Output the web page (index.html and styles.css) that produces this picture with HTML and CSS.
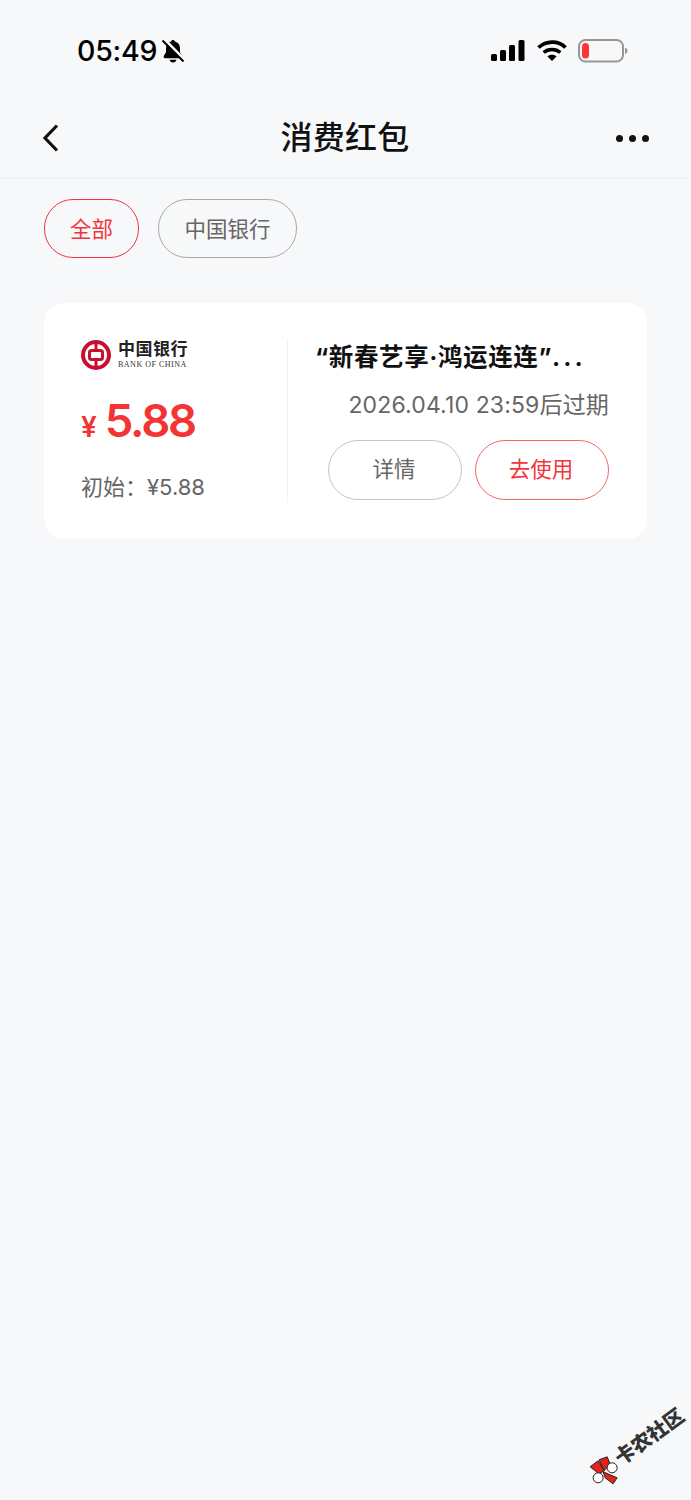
FILE: index.html
```html
<!DOCTYPE html>
<html lang="zh-CN">
<head>
<meta charset="utf-8">
<title>消费红包</title>
<link rel="stylesheet" href="styles.css">
</head>
<body>
<div class="page">
  <header class="status">
    <div class="status-left">
      <span class="time">05:49</span>
      <svg class="bell" width="24" height="26" viewBox="0 0 24 26"><path d="M12 2c1 0 1.800.7 1.900 1.600 3.500.8 5.100 3.500 5.100 7v3.400c0 1.300 2.400 3.300 2.400 4.800 0 .8-.5 1.400-1.400 1.400H4c-.9 0-1.400-.6-1.400-1.400 0-1.500 2.400-3.500 2.400-4.800v-3.400c0-3.500 1.600-6.200 5.100-7C10.200 2.700 11 2 12 2z" fill="#000"/><path d="M8.500 21.700h7c-.3 1.600-1.700 2.800-3.500 2.800s-3.200-1.200-3.500-2.800z" fill="#000"/><path d="M3.500 1.500l20 20.500" stroke="#f7f8fa" stroke-width="3"/><path d="M1.500 2.500l21 21" stroke="#000" stroke-width="2"/></svg>
    </div>
    <div class="status-right">
      <svg width="34" height="22" viewBox="0 0 34 22"><rect x="0" y="14" width="6" height="7" rx="1.500"/><rect x="9" y="10" width="6" height="11" rx="1.500"/><rect x="18" y="5" width="6" height="16" rx="1.500"/><rect x="27.500" y="0" width="6" height="21" rx="1.500"/></svg>
      <svg width="30" height="22" viewBox="0 0 30 22"><path d="M1.500 7.500C9 .8 21-.2 28.500 7.500" fill="none" stroke="#000" stroke-width="3.600"/><path d="M6.700 12.500c4.500-4 12-4 16.600 0" fill="none" stroke="#000" stroke-width="3.600"/><path d="M10.300 16.300c2.700-2.200 6.700-2.200 9.400 0L15 21z"/></svg>
      <svg class="battery" width="50" height="24" viewBox="0 0 50 24"><rect x="1" y="1" width="44" height="21.500" rx="6.500" fill="none" stroke="#969696" stroke-width="2"/><rect x="4" y="4" width="7" height="15.500" rx="3.500" fill="#ff3434"/><path d="M47 8.500c1.500.4 2.500 1.700 2.500 3.200s-1 2.800-2.500 3.200z" fill="#969696"/></svg>
    </div>
  </header>

  <nav class="nav">
    <svg class="back" width="20" height="30" viewBox="0 0 20 30"><path d="M16 2.500L4 15l12 12.500" fill="none" stroke="#111" stroke-width="3.200"/></svg>
    <h1 class="title">消费红包</h1>
    <div class="more"><i></i><i></i><i></i></div>
  </nav>

  <div class="chips">
    <span class="chip chip-on">全部</span>
    <span class="chip">中国银行</span>
  </div>

  <section class="card">
    <div class="card-left">
      <div class="logo">
        <svg width="30" height="30" viewBox="0 0 30 30"><circle cx="15" cy="15" r="13" fill="none" stroke="#c8102e" stroke-width="4"/><rect x="8.500" y="10.500" width="13" height="9" rx="2" fill="none" stroke="#c8102e" stroke-width="3"/><path d="M15 2v8M15 20v8" stroke="#c8102e" stroke-width="3"/></svg>
        <div class="logo-text">
          <span class="logo-cn">中国银行</span>
          <span class="logo-en">BANK OF CHINA</span>
        </div>
      </div>
      <div class="amount"><span class="yen">¥</span><span class="value">5.88</span></div>
      <div class="initial">初始：¥5.88</div>
    </div>
    <div class="card-right">
      <div class="name">“新春艺享·鸿运连连”<span class="dots">...</span></div>
      <div class="expire">2026.04.10 23:59后过期</div>
      <div class="actions">
        <span class="btn">详情</span>
        <span class="btn btn-red">去使用</span>
      </div>
    </div>
  </section>

  <div class="mark">
    <svg class="mark-icon" width="30" height="30" viewBox="0 0 30 30"><path d="M1 12l8-6 6 10-5 3z" fill="#e3231b" stroke="#222"/><path d="M10 5l8-3 3 7-6 7z" fill="#e3231b" stroke="#222"/><path d="M14 17l14 6-4 6-8-6z" fill="#e3231b" stroke="#222"/><circle cx="9" cy="23" r="5" fill="#fff" stroke="#222"/><circle cx="23" cy="13" r="5" fill="#fff" stroke="#222"/></svg>
    <span class="mark-text">卡农社区</span>
  </div>
</div>
</body>
</html>
```

FILE: styles.css
```css
* { box-sizing: border-box; margin: 0; padding: 0; }
html, body { width: 691px; height: 1500px; overflow: hidden; }
body {
  background: #f7f8fa;
  font-family: Inter, "Noto Sans CJK SC", sans-serif;
  color: #666;
}
.page { position: relative; width: 691px; height: 1500px; }

.status {
  height: 100px;
  padding: 35px 63px 0 77px;
  display: flex;
  justify-content: space-between;
  align-items: flex-start;
}
.status-left { display: flex; align-items: center; gap: 4px; height: 32px; }
.time { font-size: 28.500px; font-weight: 500; color: #000; line-height: 32px; letter-spacing: -.2px; }
.status-right { display: flex; align-items: center; gap: 12px; height: 32px; }
.battery { margin-left: -1px; }

.nav {
  height: 79px;
  border-bottom: 1px solid #eeeff1;
  padding: 0 42px 2px 41px;
  display: grid;
  grid-template-columns: 1fr auto 1fr;
  align-items: center;
}
.title { font-size: 32px; font-weight: 500; color: #111; letter-spacing: .3px; line-height: 44px; }
.more { display: flex; gap: 6px; justify-self: end; }
.more i { width: 7px; height: 7px; border-radius: 50%; background: #111; }

.chips { display: flex; gap: 19px; padding: 20px 0 0 44px; }
.chip {
  height: 59px;
  padding: 0 25px;
  border: 1px solid #a9a9a9;
  border-radius: 29px;
  font-size: 21.500px;
  line-height: 58px;
  color: #666;
}
.chip:last-child { padding: 0 25.500px; }
.chip-on { border-color: #f4333c; color: #f4333c; }

.card {
  margin: 45px 44px 0;
  height: 236px;
  background: #fff;
  border-radius: 20px;
  display: flex;
  padding: 37px 38px 37px 37px;
}
.card-left {
  width: 207px;
  border-right: 1px solid #f2f2f2;
  display: flex;
  flex-direction: column;
}
.logo { display: flex; align-items: center; gap: 7px; height: 30px; }
.logo-text { display: flex; flex-direction: column; width: 70px; }
.logo-cn { font-size: 17px; font-weight: 700; color: #222; line-height: 19px; letter-spacing: .5px; white-space: nowrap; }
.logo-en { font-family: "Liberation Serif", serif; font-size: 8px; color: #333; line-height: 11px; letter-spacing: .5px; white-space: nowrap; }
.amount { display: flex; align-items: baseline; gap: 8px; margin-top: 23px; color: #f33334; height: 56px; }
.yen { font-size: 28px; font-weight: 600; line-height: 56px; }
.value { font-size: 45.500px; font-weight: 600; line-height: 56px; letter-spacing: -2.200px; }
.initial { font-size: 22px; line-height: 30px; margin-top: 23px; white-space: nowrap; }

.card-right { flex: 1; display: flex; flex-direction: column; align-items: flex-end; min-width: 0; }
.name { align-self: flex-start; margin: -2px 0 0 27px; font-size: 24.500px; font-weight: 700; color: #111; line-height: 38px; white-space: nowrap; letter-spacing: .6px; }
.dots { letter-spacing: 3px; }
.expire { margin-top: 13px; font-size: 23px; line-height: 32px; white-space: nowrap; letter-spacing: .15px; }
.actions { display: flex; gap: 13px; margin-top: 19px; }
.btn {
  width: 134px;
  height: 60px;
  padding-right: 2px;
  border: 1px solid #c4c4c4;
  border-radius: 30px;
  font-size: 21.500px;
  line-height: 56px;
  text-align: center;
  color: #666;
}
.btn-red { border-color: #f4666b; color: #f4333c; }

.mark {
  position: absolute;
  left: 597px;
  top: 1449px;
  display: flex;
  align-items: center;
  gap: 1px;
  transform: rotate(-36deg);
  transform-origin: 20px 30px;
}
.mark-icon { transform: rotate(36deg); }
.mark-text { font-size: 20px; font-weight: 900; color: #333; line-height: 28px; white-space: nowrap; }
```
